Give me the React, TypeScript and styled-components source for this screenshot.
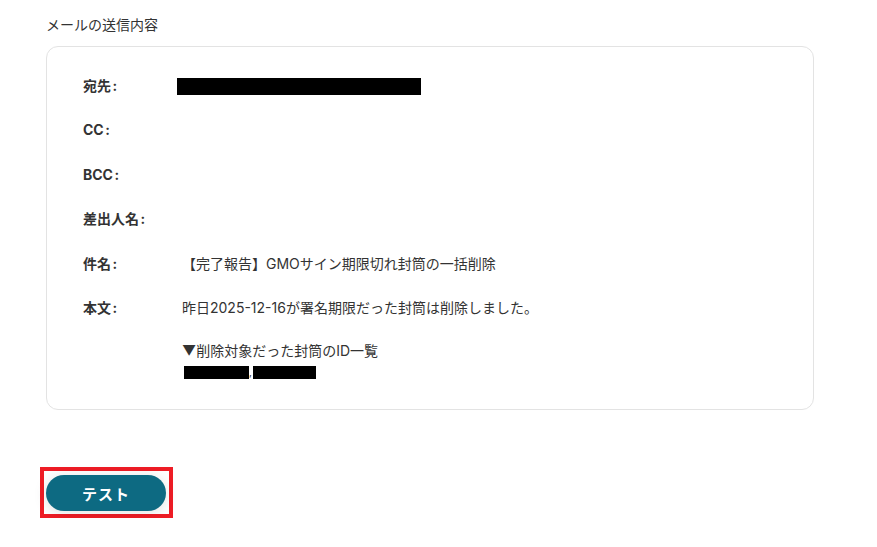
import React from "react";
import styled, { createGlobalStyle } from "styled-components";

const GlobalStyle = createGlobalStyle`
  body {
    margin: 0;
    background: #ffffff;
    font-family: Inter, "Noto Sans CJK JP", sans-serif;
    color: #333333;
  }
`;

const SPagina = styled.div`
  padding: 14px 0 0 46px;
  width: 768px;
`;

const STitulo = styled.div`
  font-size: 14px;
  line-height: 21.5px;
  margin-bottom: 10px;
  color: #333333;
`;

const STarjeta = styled.div`
  box-sizing: border-box;
  border: 1px solid #e3e3e3;
  border-radius: 12px;
  padding: 28px 36px 26px 36px;
  display: flex;
  flex-direction: column;
  gap: 23.1px;
`;

const SFila = styled.div`
  display: grid;
  grid-template-columns: 99px 1fr;
  font-size: 14px;
  line-height: 21.5px;
`;

const SEtiqueta = styled.div`
  font-weight: 700;
  color: #333333;
`;

const SDosPuntos = styled.span`
  margin-left: 1.5px;
`;

const SValor = styled.div`
  color: #333333;
`;

const STachado = styled.span<{ $ancho: number; $alto: number; $dx?: number }>`
  display: inline-block;
  vertical-align: middle;
  background: #000000;
  width: ${(p) => p.$ancho}px;
  height: ${(p) => p.$alto}px;
  margin-left: ${(p) => p.$dx ?? 0}px;
`;

const SEspacio = styled.div`
  height: 21.5px;
`;

const SLineaIds = styled.div`
  display: flex;
  align-items: center;
  height: 21.5px;
  font-size: 10px;
`;

const SZonaBoton = styled.div`
  margin-top: 57px;
  margin-left: -6px;
`;

const SMarco = styled.div`
  display: inline-block;
  border: 4px solid #ee1c25;
  padding: 4px 3px 3px 2px;
`;

const SBoton = styled.button`
  display: block;
  width: 120px;
  height: 36px;
  border: none;
  border-radius: 18px;
  background: #0d6a82;
  color: #ffffff;
  font-family: Inter, "Noto Sans CJK JP", sans-serif;
  font-size: 15px;
  font-weight: 700;
  letter-spacing: 1px;
  box-shadow: 0 2px 14px rgba(0, 0, 0, 0.12);
  cursor: pointer;
`;

const filas = [
  { etiqueta: "CC" },
  { etiqueta: "BCC" },
  { etiqueta: "差出人名" },
  { etiqueta: "件名", valor: "【完了報告】GMOサイン期限切れ封筒の一括削除" },
];

const Etiqueta = ({ texto }: { texto: string }) => (
  <SEtiqueta>
    {texto}
    <SDosPuntos>:</SDosPuntos>
  </SEtiqueta>
);

const App = () => {
  return (
    <SPagina>
      <GlobalStyle />
      <STitulo>メールの送信内容</STitulo>
      <STarjeta>
        <SFila>
          <Etiqueta texto="宛先" />
          <SValor>
            <STachado $ancho={244} $alto={17} $dx={-5} />
          </SValor>
        </SFila>
        {filas.map((f) => (
          <SFila key={f.etiqueta}>
            <Etiqueta texto={f.etiqueta} />
            <SValor>{f.valor ?? ""}</SValor>
          </SFila>
        ))}
        <SFila>
          <Etiqueta texto="本文" />
          <SValor>
            <div>昨日2025-12-16が署名期限だった封筒は削除しました。</div>
            <SEspacio />
            <div>▼削除対象だった封筒のID一覧</div>
            <SLineaIds>
              <STachado $ancho={65} $alto={13} $dx={2} />
              ,
              <STachado $ancho={63} $alto={13} $dx={1} />
            </SLineaIds>
          </SValor>
        </SFila>
      </STarjeta>
      <SZonaBoton>
        <SMarco>
          <SBoton>テスト</SBoton>
        </SMarco>
      </SZonaBoton>
    </SPagina>
  );
};

export default App;
